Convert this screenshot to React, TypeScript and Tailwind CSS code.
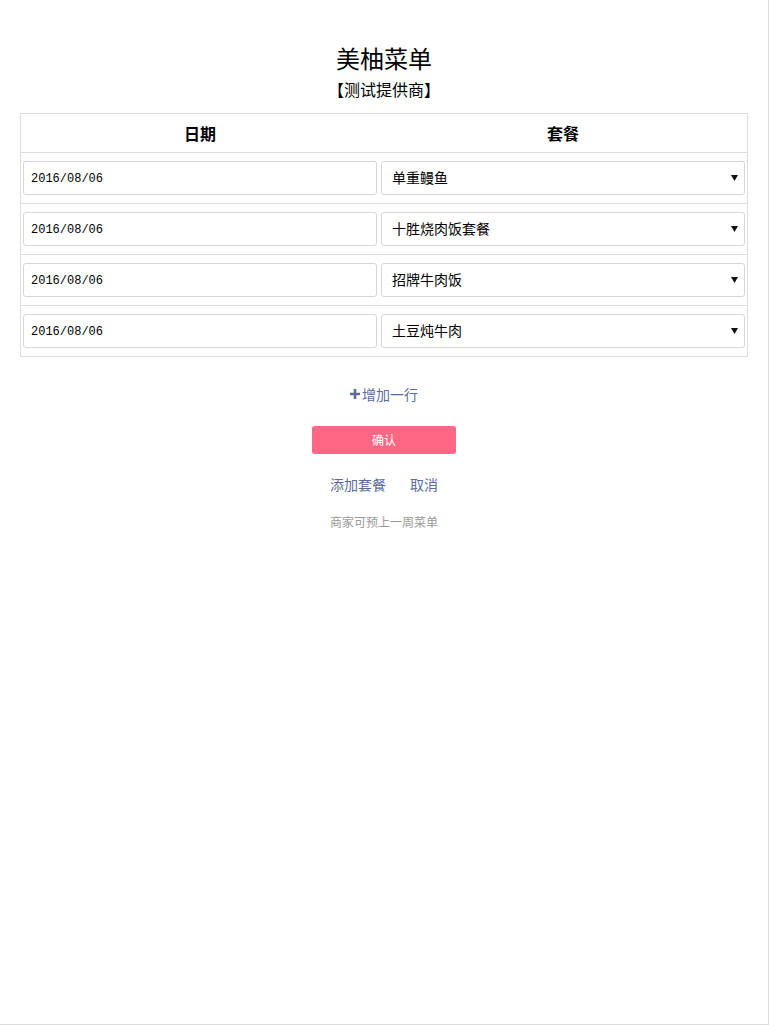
import React from 'react'

const CJK = "font-['Noto_Sans_CJK_SC',sans-serif]"

const ROWS = [
  { date: '2016/08/06', meal: '单重鳗鱼' },
  { date: '2016/08/06', meal: '十胜烧肉饭套餐' },
  { date: '2016/08/06', meal: '招牌牛肉饭' },
  { date: '2016/08/06', meal: '土豆炖牛肉' },
]

function Arrow() {
  return (
    <svg width="7" height="6" viewBox="0 0 7 6" className="shrink-0">
      <path d="M0 0 L7 0 L3.5 6 Z" fill="#111" />
    </svg>
  )
}

export default function App() {
  return (
    <div className={`w-[769px] h-[1025px] bg-white border-r border-b border-[#dcdcdc] ${CJK}`}>
      {/* 标题 */}
      <div className="pt-[40px] flex flex-col items-center text-black">
        <h1 className="text-[24px] leading-[36px]">美柚菜单</h1>
        <p className="text-[16px] leading-[24px] mt-[1px]">【测试提供商】</p>
      </div>

      {/* 菜单表格 */}
      <div className="mx-[20px] mt-[12px] border border-[#dddddd]">
        <div className="grid grid-cols-[358px_368px] h-[38px] items-center text-[16px] font-bold text-black">
          <div className="text-center">日期</div>
          <div className="text-center">套餐</div>
        </div>
        {ROWS.map((row, i) => (
          <div key={i} className="grid grid-cols-[358px_368px] border-t border-[#dddddd] py-[8px]">
            <div className="px-[2px]">
              <div className="h-[34px] border border-[#d6d6d6] rounded-[3px] flex items-center pl-[7px] pt-[1px] text-[12px] text-black font-['Liberation_Mono',monospace]">
                {row.date}
              </div>
            </div>
            <div className="px-[2px]">
              <div className="h-[34px] border border-[#d6d6d6] rounded-[3px] flex items-center justify-between pl-[10px] pr-[6px] text-[14px] text-black">
                <span className="-mt-[1px]">{row.meal}</span>
                <Arrow />
              </div>
            </div>
          </div>
        ))}
      </div>

      {/* 操作 */}
      <div className="flex flex-col items-center">
        <button className="mt-[27px] h-[20px] flex items-center gap-[2px] text-[14px] text-[#5a6b9a]">
          <svg width="10" height="10" viewBox="0 0 10 10">
            <path d="M0 5 H10 M5 0 V10" stroke="#5a6b9a" strokeWidth="2.6" />
          </svg>
          <span>增加一行</span>
        </button>
        <button className="mt-[22px] w-[144px] h-[28px] rounded-[3px] bg-[#ff6785] text-white text-[12px]">
          确认
        </button>
        <div className="mt-[20px] h-[20px] flex items-center gap-[24px] text-[14px] text-[#5a6b9a]">
          <span>添加套餐</span>
          <span>取消</span>
        </div>
        <p className="mt-[19px] text-[12px] leading-[18px] text-[#999999]">商家可预上一周菜单</p>
      </div>
    </div>
  )
}
